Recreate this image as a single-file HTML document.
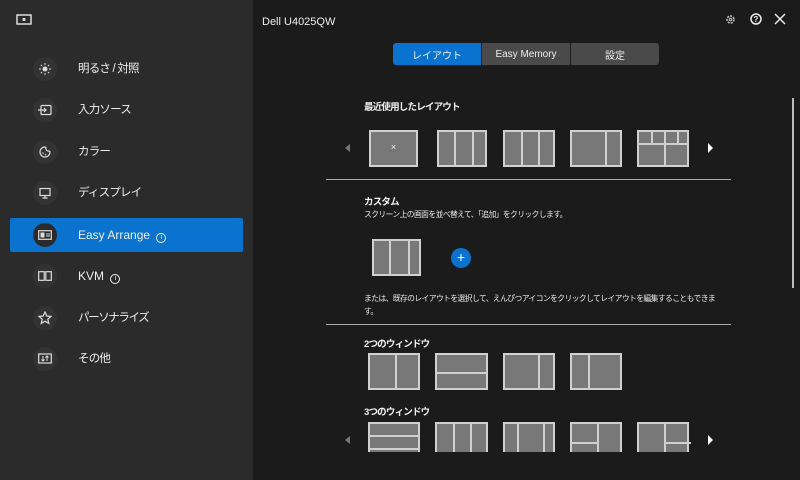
<!DOCTYPE html>
<html><head><meta charset="utf-8"><style>
*{margin:0;padding:0;box-sizing:border-box}
body{width:800px;height:480px;background:#1b1b1b;font-family:"Liberation Sans","Noto Sans CJK JP",sans-serif;color:#eee;position:relative;overflow:hidden}
.a{position:absolute}
#side{left:0;top:0;width:253px;height:480px;background:#2b2b2b}
.ic{position:absolute;left:33px;width:24px;height:24px;border-radius:50%;background:#333;display:flex;align-items:center;justify-content:center}
.lb{position:absolute;left:78px;font-size:12px;color:#eee;line-height:14px}
.jp{letter-spacing:-0.8px;font-size:11.5px}
.t{position:absolute;background:#787878;border:2px solid #d0d0d0}
.t i{position:absolute;background:#d0d0d0}
.h{font-size:9.5px;font-weight:bold;position:absolute;left:364px;color:#f0f0f0;letter-spacing:-0.8px}
.s{font-size:7.8px;position:absolute;left:364px;color:#e8e8e8;letter-spacing:-0.6px}
.ln{position:absolute;left:326px;width:405px;height:1px;background:#aaa}
.tab{position:absolute;top:43px;height:22px;width:88px;font-size:10px;display:flex;align-items:center;justify-content:center;color:#eee}
</style></head><body>
<div id="side" class="a">
<svg class="a" style="left:16px;top:14px" width="16" height="12"><rect x="1" y="1" width="14" height="9" fill="none" stroke="#ddd" stroke-width="1.5"/><circle cx="8" cy="5.5" r="1.6" fill="#ddd"/></svg>
<div class="a" style="left:10px;top:218px;width:233px;height:34px;background:#0a73cf;border-radius:2px"></div>

<div class="ic" style="top:57px"><svg width="12" height="12"><circle cx="6" cy="6" r="2.5" fill="#ddd"/><g stroke="#ddd" stroke-width="1"><path d="M6 0v2M6 10v2M0 6h2M10 6h2M1.8 1.8l1.4 1.4M8.8 8.8l1.4 1.4M1.8 10.2l1.4-1.4M8.8 3.2l1.4-1.4"/></g></svg></div>
<div class="lb jp" style="top:62px">明るさ / 対照</div>
<div class="ic" style="top:98px"><svg width="14" height="12"><rect x="3" y="1.5" width="10" height="9" rx="1" fill="none" stroke="#ddd" stroke-width="1.2"/><path d="M0 6h8M6 4l2 2-2 2" stroke="#ddd" fill="none" stroke-width="1.2"/></svg></div>
<div class="lb jp" style="top:103px">入力ソース</div>
<div class="ic" style="top:140px"><svg width="12" height="12"><path d="M6 1a5 5 0 1 0 5 5c0-1-1-1-2-1S7 4 7 3 7 1 6 1z" fill="none" stroke="#ddd" stroke-width="1.2"/><circle cx="4" cy="7" r=".8" fill="#ddd"/><circle cx="6.5" cy="8.5" r=".8" fill="#ddd"/></svg></div>
<div class="lb jp" style="top:145px">カラー</div>
<div class="ic" style="top:181px"><svg width="12" height="12"><rect x="1" y="1.5" width="10" height="7" fill="none" stroke="#ddd" stroke-width="1.2"/><path d="M6 8.5v2.5M3.5 11h5" stroke="#ddd" stroke-width="1.2"/></svg></div>
<div class="lb jp" style="top:186px">ディスプレイ</div>
<div class="ic" style="top:223px;background:#2b2b2b"><svg width="14" height="10"><rect x=".7" y=".7" width="12.6" height="8.6" fill="none" stroke="#ddd" stroke-width="1.2"/><rect x="2.5" y="2.5" width="4" height="5" fill="#ddd"/><path d="M8 4h4M8 6h4" stroke="#ddd"/></svg></div>
<div class="lb" style="top:228px">Easy Arrange <span style="display:inline-block;width:10px;height:10px;border:1px solid #eee;border-radius:50%;font-size:7px;text-align:center;line-height:8px;margin-left:3px;vertical-align:0">i</span></div>
<div class="ic" style="top:264px"><svg width="14" height="10"><rect x=".7" y=".7" width="5.5" height="8.6" fill="none" stroke="#ddd" stroke-width="1.2"/><rect x="7.8" y=".7" width="5.5" height="8.6" fill="none" stroke="#ddd" stroke-width="1.2"/></svg></div>
<div class="lb" style="top:269px">KVM <span style="display:inline-block;width:10px;height:10px;border:1px solid #eee;border-radius:50%;font-size:7px;text-align:center;line-height:8px;margin-left:3px">i</span></div>
<div class="ic" style="top:306px"><svg width="14" height="14"><path d="M7 1l1.8 4 4.2.4-3.2 2.8 1 4.2L7 10.2 3.2 12.4l1-4.2L1 5.4l4.2-.4z" fill="none" stroke="#ddd" stroke-width="1.2"/></svg></div>
<div class="lb jp" style="top:311px;letter-spacing:-1.4px">パーソナライズ</div>
<div class="ic" style="top:347px"><svg width="14" height="12"><rect x=".7" y="1" width="12.6" height="9" fill="none" stroke="#ddd" stroke-width="1.2"/><path d="M5 3v5M3.5 6.5L5 8l1.5-1.5M9 8V3M7.5 4.5L9 3l1.5 1.5" stroke="#ddd" fill="none"/></svg></div>
<div class="lb jp" style="top:352px">その他</div>
</div>

<div class="a" style="left:262px;top:16px;font-size:11px;color:#eee">Dell U4025QW</div>
<svg class="a" style="left:725px;top:14px" width="11" height="11"><circle cx="5.5" cy="5.5" r="3.5" fill="none" stroke="#ccc" stroke-width="1.5" stroke-dasharray="2 1.2"/><circle cx="5.5" cy="5.5" r="1.3" fill="none" stroke="#ccc"/></svg>
<svg class="a" style="left:750px;top:13px" width="12" height="12"><circle cx="6" cy="6" r="5" fill="none" stroke="#eee" stroke-width="1.5"/><text x="6" y="9" font-size="8" fill="#eee" text-anchor="middle" font-weight="bold" font-family="Liberation Sans">?</text></svg>
<svg class="a" style="left:774px;top:13px" width="12" height="12"><path d="M1 1l10 10M11 1L1 11" stroke="#eee" stroke-width="1.5"/></svg>

<div class="tab" style="left:393px;background:#0a73cf;border-radius:3px 0 0 3px">レイアウト</div>
<div class="tab" style="left:482px;background:#4a4a4a">Easy Memory</div>
<div class="tab" style="left:571px;background:#4a4a4a;border-radius:0 3px 3px 0">設定</div>

<div class="a" style="left:792px;top:98px;width:2px;height:190px;background:#bbb"></div>

<div class="h" style="top:99px">最近使用したレイアウト</div>
<div class="a" style="left:345px;top:144px;width:0;height:0;border:4px solid transparent;border-right:5px solid #777;border-left:0"></div>
<div class="a" style="left:708px;top:143px;width:0;height:0;border:5px solid transparent;border-left:5px solid #fff;border-right:0"></div>
<div class="t" style="left:369px;top:130px;width:49px;height:37px"><span style="position:absolute;left:0;right:0;top:10px;text-align:center;font-size:9px;color:#eee">×</span></div>
<div class="t" style="left:437px;top:130px;width:50px;height:37px"><i style="left:15px;top:0;width:1.5px;height:100%"></i><i style="left:33px;top:0;width:1.5px;height:100%"></i></div>
<div class="t" style="left:503px;top:130px;width:52px;height:37px"><i style="left:16px;top:0;width:1.5px;height:100%"></i><i style="left:33px;top:0;width:1.5px;height:100%"></i></div>
<div class="t" style="left:570px;top:130px;width:52px;height:37px"><i style="left:33px;top:0;width:1.5px;height:100%"></i></div>
<div class="t" style="left:637px;top:130px;width:52px;height:37px"><i style="left:0;top:11px;width:100%;height:1.5px"></i><i style="left:25px;top:0;width:1.5px;height:100%"></i><i style="left:12px;top:0;width:1.5px;height:11px"></i><i style="left:38px;top:0;width:1.5px;height:11px"></i></div>
<div class="ln" style="top:179px"></div>

<div class="h" style="top:194px">カスタム</div>
<div class="s" style="top:209px">スクリーン上の画面を並べ替えて、「追加」をクリックします。</div>
<div class="t" style="left:372px;top:239px;width:49px;height:37px"><i style="left:15px;top:0;width:1.5px;height:100%"></i><i style="left:34px;top:0;width:1.5px;height:100%"></i></div>
<div class="a" style="left:451px;top:248px;width:20px;height:20px;border-radius:50%;background:#0a73cf;color:#fff;font-size:14px;line-height:19px;text-align:center">+</div>
<div class="s" style="top:292px;line-height:13px;white-space:nowrap">または、既存のレイアウトを選択して、えんぴつアイコンをクリックしてレイアウトを編集することもできま<br>す。</div>
<div class="ln" style="top:324px"></div>

<div class="h" style="top:336px">2つのウィンドウ</div>
<div class="t" style="left:368px;top:353px;width:52px;height:37px"><i style="left:25px;top:0;width:1.5px;height:100%"></i></div>
<div class="t" style="left:435px;top:353px;width:53px;height:37px"><i style="left:0;top:17px;width:100%;height:1.5px"></i></div>
<div class="t" style="left:503px;top:353px;width:52px;height:37px"><i style="left:33px;top:0;width:1.5px;height:100%"></i></div>
<div class="t" style="left:570px;top:353px;width:52px;height:37px"><i style="left:16px;top:0;width:1.5px;height:100%"></i></div>

<div class="h" style="top:404px">3つのウィンドウ</div>
<div class="a" style="left:345px;top:436px;width:0;height:0;border:4px solid transparent;border-right:5px solid #777;border-left:0"></div>
<div class="a" style="left:708px;top:435px;width:0;height:0;border:5px solid transparent;border-left:5px solid #fff;border-right:0"></div>
<div class="t" style="left:368px;top:422px;width:52px;height:30px;border-bottom:none"><i style="left:0;top:11px;width:100%;height:1.5px"></i><i style="left:0;top:24px;width:100%;height:1.5px"></i></div>
<div class="t" style="left:435px;top:422px;width:53px;height:30px;border-bottom:none"><i style="left:16px;top:0;width:1.5px;height:100%"></i><i style="left:33px;top:0;width:1.5px;height:100%"></i></div>
<div class="t" style="left:503px;top:422px;width:52px;height:30px;border-bottom:none"><i style="left:12px;top:0;width:1.5px;height:100%"></i><i style="left:38px;top:0;width:1.5px;height:100%"></i></div>
<div class="t" style="left:570px;top:422px;width:52px;height:30px;border-bottom:none"><i style="left:25px;top:0;width:1.5px;height:100%"></i><i style="left:0;top:18px;width:25px;height:1.5px"></i></div>
<div class="t" style="left:637px;top:422px;width:52px;height:30px;border-bottom:none"><i style="left:25px;top:0;width:1.5px;height:100%"></i><i style="left:25px;top:18px;width:27px;height:1.5px"></i></div>
</body></html>
